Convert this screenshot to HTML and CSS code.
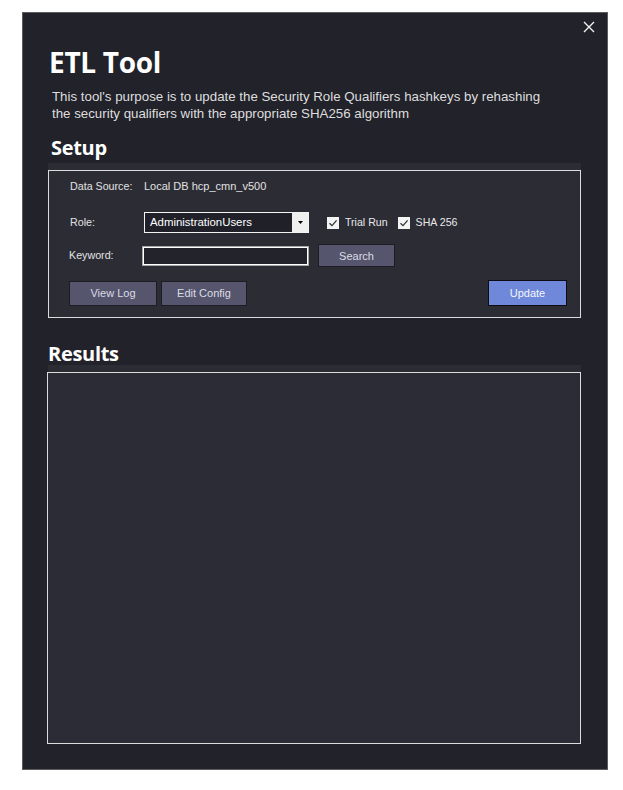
FILE: index.html
```html
<!DOCTYPE html>
<html>
<head>
<meta charset="utf-8">
<link rel="stylesheet" href="styles.css">
</head>
<body>
<div class="window">
  <button class="close" aria-label="Close">
    <svg width="12" height="12" viewBox="0 0 12 12"><path d="M1 1 L11 11 M11 1 L1 11" stroke="#f2f2f2" stroke-width="1.4" fill="none"/></svg>
  </button>
  <h1 class="title">ETL Tool</h1>
  <p class="desc">This tool's purpose is to update the Security Role Qualifiers hashkeys by rehashing<br>the security qualifiers with the appropriate SHA256 algorithm</p>
  <h2 class="section setup-head">Setup</h2>
  <div class="panel">
    <div class="group">
      <div class="row row-source">
        <span class="label">Data Source:</span>
        <span class="value">Local DB hcp_cmn_v500</span>
      </div>
      <div class="row row-role">
        <span class="label">Role:</span>
        <div class="combo">
          <span class="combo-text">AdministrationUsers</span>
          <span class="combo-btn"><svg width="5" height="3" viewBox="0 0 5 3"><path d="M0 0 L5 0 L2.5 3 Z" fill="#000"/></svg></span>
        </div>
        <label class="check first"><span class="box"><svg width="10" height="10" viewBox="0 0 10 10"><path d="M1.5 5.2 L4 7.6 L8.6 2.4" stroke="#333" stroke-width="1.3" fill="none"/></svg></span>Trial Run</label>
        <label class="check"><span class="box"><svg width="10" height="10" viewBox="0 0 10 10"><path d="M1.5 5.2 L4 7.6 L8.6 2.4" stroke="#333" stroke-width="1.3" fill="none"/></svg></span>SHA 256</label>
      </div>
      <div class="row row-keyword">
        <span class="label kw">Keyword:</span>
        <span class="textbox"></span>
        <button class="btn search">Search</button>
      </div>
      <div class="row row-actions">
        <button class="btn viewlog">View Log</button>
        <button class="btn editcfg">Edit Config</button>
        <button class="btn update">Update</button>
      </div>
    </div>
  </div>
  <h2 class="section results-head">Results</h2>
  <div class="panel results-panel">
    <div class="results"></div>
  </div>
</div>
</body>
</html>
```

FILE: styles.css
```css
html, body {
  margin: 0;
  padding: 0;
  background: #ffffff;
}

.window {
  position: relative;
  box-sizing: border-box;
  margin: 12px 0 0 22px;
  width: 586px;
  height: 758px;
  border: 1px solid #5c5c5c;
  background: #22222a;
  padding: 0 26px 0 25px;
  color: #e6e6e6;
  font-family: "Liberation Sans", Arial, sans-serif;
}

.close {
  position: absolute;
  top: 7px;
  right: 11px;
  width: 14px;
  height: 14px;
  padding: 0;
  border: 0;
  background: transparent;
  display: flex;
  align-items: center;
  justify-content: center;
}

.title {
  margin: 33px 0 0 1px;
  font-family: "Open Sans", sans-serif;
  font-weight: 700;
  font-size: 28px;
  line-height: 32px;
  color: #ffffff;
  letter-spacing: -0.3px;
}

.desc {
  margin: 10px 0 0 4px;
  font-size: 13.3px;
  line-height: 17px;
  color: #dedede;
}

.section {
  font-family: "Open Sans", sans-serif;
  font-weight: 700;
  font-size: 20px;
  line-height: 24px;
  color: #ffffff;
  letter-spacing: -0.3px;
}

.setup-head {
  margin: 14px 0 0 3px;
}

.panel {
  margin-top: 3px;
  padding-top: 7px;
  background: #2c2c35;
}

.group {
  box-sizing: border-box;
  height: 148px;
  border: 1px solid #dcdcdc;
  padding: 9px 13px 0 20px;
  font-size: 10.7px;
  line-height: 13px;
  color: #e2e2e2;
}

.row {
  display: flex;
  align-items: center;
}

.label {
  width: 74px;
  margin-left: 1px;
  flex: none;
}

.value {
  font-size: 11px;
}

.row-role {
  margin-top: 19px;
}

.combo {
  box-sizing: border-box;
  width: 165px;
  height: 21px;
  border: 1px solid #f4f4f4;
  background: #22222a;
  display: flex;
  align-items: stretch;
}

.combo-text {
  flex: 1;
  padding-left: 4px;
  font-size: 11.4px;
  color: #ffffff;
  background: #202029;
  margin: 1px 0 1px 1px;
  line-height: 17px;
}

.combo-btn {
  width: 16px;
  background: #f0f0f0;
  display: flex;
  align-items: center;
  justify-content: center;
}

.check {
  display: flex;
  align-items: center;
  color: #e8e8e8;
  font-size: 10.6px;
}

.check.first {
  margin-left: 18px;
  margin-right: 10px;
}

.box {
  box-sizing: border-box;
  width: 12px;
  height: 12px;
  background: #f4f4f4;
  margin-right: 6px;
  display: flex;
  align-items: center;
  justify-content: center;
}

.row-keyword {
  margin-top: 11px;
}

.kw {
  width: 73px;
  margin-left: 0;
}

.textbox {
  box-sizing: border-box;
  width: 167px;
  height: 20px;
  border: 1px solid #a8a8a8;
  box-shadow: inset 0 0 0 1px #ffffff;
  background: #23232c;
}

.btn {
  box-sizing: border-box;
  padding: 0;
  border: 1px solid #1c1c24;
  background: #55556e;
  color: #dcdce4;
  font-family: "Liberation Sans", Arial, sans-serif;
  font-size: 11px;
  height: 25px;
}

.search {
  margin-left: 9px;
  width: 77px;
  height: 23px;
}

.row-actions {
  margin-top: 13px;
}

.viewlog {
  width: 88px;
}

.editcfg {
  width: 86px;
  margin-left: 4px;
}

.update {
  margin-left: auto;
  width: 79px;
  height: 26px;
  background: #6f88da;
  border-color: #0c0c12;
  color: #f4f6ff;
}

.results-head {
  margin: 24px 0 0 0;
}

.results-panel {
  margin-top: -1px;
}

.results {
  box-sizing: border-box;
  margin-left: -1px;
  width: 534px;
  height: 372px;
  border: 1px solid #dcdcdc;
  background: #2c2c36;
}
```
